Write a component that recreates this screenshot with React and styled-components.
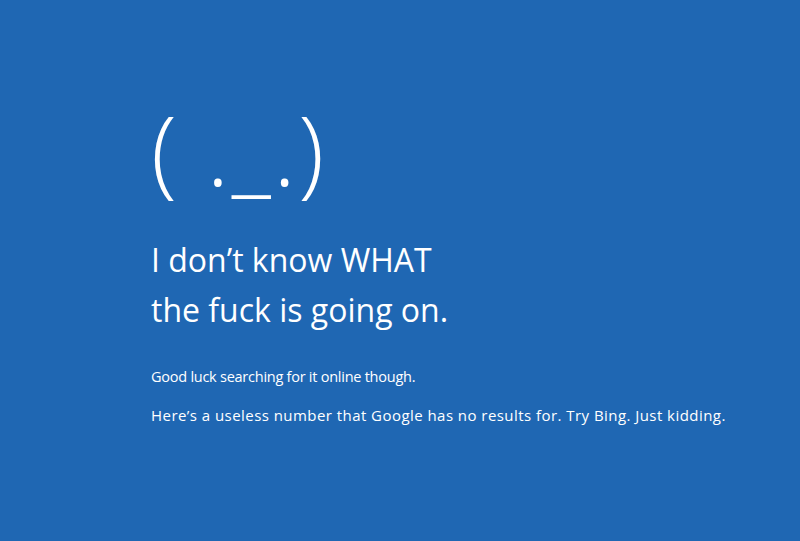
import React from "react";
import styled, { createGlobalStyle } from "styled-components";

const GlobalStyle = createGlobalStyle`
  html, body {
    margin: 0;
    padding: 0;
    background: #1f67b3;
  }
`;

const Screen = styled.div`
  width: 800px;
  height: 541px;
  background: #1f67b3;
  color: #ffffff;
  font-family: "Open Sans", "Noto Sans", sans-serif;
  box-sizing: border-box;
  padding: 84px 0 0 151px;
  overflow: hidden;
`;

const Face = styled.div`
  font-size: 95px;
  font-weight: 300;
  line-height: 130px;
  letter-spacing: 2.5px;
  white-space: pre;
`;

const Headline = styled.h1`
  margin: 21px 0 0 0;
  font-size: 32px;
  font-weight: 400;
  line-height: 50px;
`;

const Note = styled.p`
  margin: ${(p) => p.$top}px 0 0 0;
  font-size: ${(p) => p.$size}px;
  line-height: 20px;
  letter-spacing: ${(p) => p.$spacing}px;
  white-space: nowrap;
`;

export default function App() {
  return (
    <Screen>
      <GlobalStyle />
      <Face>{"( ._.)"}</Face>
      <Headline>
        I don’t know WHAT
        <br />
        the fuck is going on.
      </Headline>
      <Note $top={32} $size={14.5} $spacing={-0.25}>
        Good luck searching for it online though.
      </Note>
      <Note $top={18} $size={15} $spacing={0.45}>
        Here’s a useless number that Google has no results for. Try Bing. Just kidding.
      </Note>
    </Screen>
  );
}
